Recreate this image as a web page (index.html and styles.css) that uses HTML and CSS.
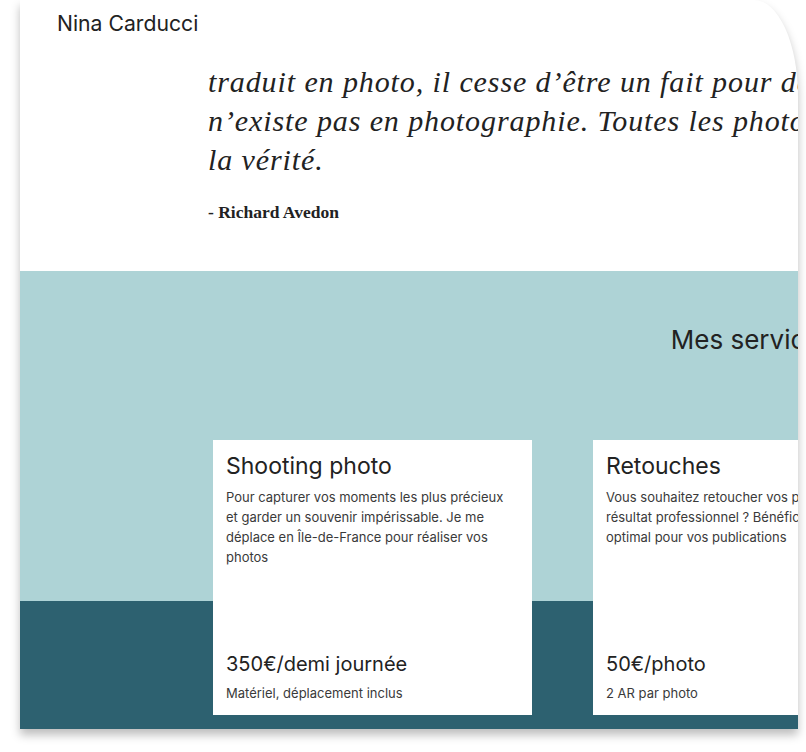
FILE: index.html
```html
<!DOCTYPE html>
<html lang="fr">
<head>
<meta charset="utf-8">
<title>Nina Carducci</title>
<link rel="stylesheet" href="styles.css">
</head>
<body>
<div class="frame">
  <div class="page">
    <header class="top">
      <span class="brand">Nina Carducci</span>
    </header>
    <section class="quote">
      <blockquote class="quote-text">
        <span class="line">traduit en photo, il cesse d’être un fait pour devenir une opinion. L’inexactitude</span>
        <span class="line">n’existe pas en photographie. Toutes les photographies sont exactes. Aucune d’entre elles n’est</span>
        <span class="line">la vérité.</span>
      </blockquote>
      <p class="author">- Richard Avedon</p>
    </section>
    <section class="services">
      <h2 class="services-title">Mes services</h2>
      <div class="cards">
        <article class="card">
          <h3 class="card-title">Shooting photo</h3>
          <p class="card-desc">Pour capturer vos moments les plus précieux et garder un souvenir impérissable. Je me déplace en Île-de-France pour réaliser vos photos</p>
          <div class="card-foot">
            <p class="card-price">350€/demi journée</p>
            <p class="card-note">Matériel, déplacement inclus</p>
          </div>
        </article>
        <article class="card">
          <h3 class="card-title">Retouches</h3>
          <p class="card-desc">Vous souhaitez retoucher vos photos pour un<br>résultat professionnel ? Bénéficiez d’un rendu<br>optimal pour vos publications</p>
          <div class="card-foot">
            <p class="card-price">50€/photo</p>
            <p class="card-note">2 AR par photo</p>
          </div>
        </article>
        <article class="card">
          <h3 class="card-title">Événements</h3>
          <p class="card-desc">Pour immortaliser vos événements professionnels ou personnels</p>
          <div class="card-foot">
            <p class="card-price">900€/jour</p>
            <p class="card-note">Matériel inclus</p>
          </div>
        </article>
      </div>
    </section>
  </div>
</div>
</body>
</html>
```

FILE: styles.css
```css
html, body {
  margin: 0;
  padding: 0;
  background: #ffffff;
}

body {
  font-family: Inter, "Liberation Sans", sans-serif;
  color: #222222;
  width: 806px;
  height: 752px;
  overflow: hidden;
}

.frame {
  margin-left: 20px;
  width: 778px;
  height: 729px;
  overflow: hidden;
  background: #ffffff;
  border-top-right-radius: 44px 96px;
  box-shadow: 0 6px 10px rgba(0, 0, 0, 0.26);
}

.page {
  width: 1465px;
}

.top {
  padding: 11px 37px 0;
  height: 24px;
}

.brand {
  font-size: 21.2px;
  line-height: 25px;
  color: #222222;
}

.quote {
  padding: 27px 0 49px 188px;
}

.quote-text {
  margin: 0;
  font-family: "Liberation Serif", "Times New Roman", serif;
  font-style: italic;
  font-size: 30px;
  letter-spacing: 0.9px;
  line-height: 39px;
  color: #222222;
}

.line {
  display: block;
  white-space: nowrap;
}

.author {
  margin: 23px 0 0;
  font-family: "Liberation Serif", "Times New Roman", serif;
  font-weight: bold;
  font-size: 17.5px;
  line-height: 20px;
  color: #222222;
}

.services {
  background: linear-gradient(to bottom, #aed3d6 0, #aed3d6 330px, #2d6170 330px, #2d6170 100%);
  padding: 53px 0 14px;
}

.services-title {
  margin: 0;
  text-align: center;
  font-weight: 400;
  font-size: 26px;
  line-height: 32px;
  color: #222222;
}

.cards {
  display: flex;
  justify-content: center;
  gap: 61px;
  margin-top: 84px;
}

.card {
  width: 319px;
  height: 275px;
  box-sizing: border-box;
  background: #ffffff;
  padding: 13px 17px 12px 13px;
  display: flex;
  flex-direction: column;
}

.card-title {
  margin: 0;
  font-weight: 400;
  font-size: 23px;
  line-height: 27px;
  color: #222222;
}

.card-desc {
  margin: 7px 0 0;
  font-size: 13px;
  line-height: 20px;
  color: #3a3a3a;
}

.card-foot {
  margin-top: auto;
}

.card-price {
  margin: 0;
  font-size: 20px;
  line-height: 24px;
  color: #222222;
}

.card-note {
  margin: 7px 0 0;
  font-size: 13px;
  line-height: 20px;
  color: #3a3a3a;
}
```
